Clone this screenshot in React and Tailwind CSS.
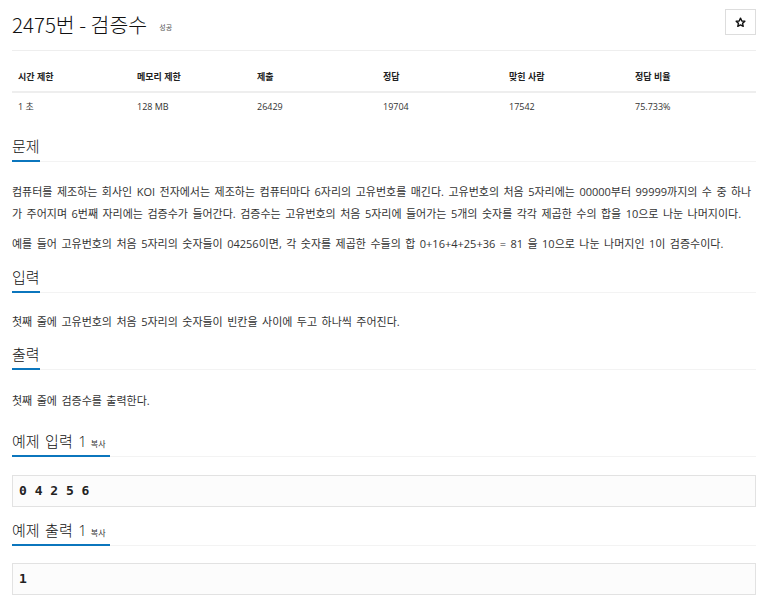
import React from "react";

const stats = [
  ["시간 제한", "1 초"],
  ["메모리 제한", "128 MB"],
  ["제출", "26429"],
  ["정답", "19704"],
  ["맞힌 사람", "17542"],
  ["정답 비율", "75.733%"],
];

const mono = { fontFamily: '"DejaVu Sans Mono", "Liberation Mono", monospace' };

function SectionTitle({ children, small, barWidth = "w-[28px]" }) {
  return (
    <div className="relative border-b border-[#f3f3f3]">
      <h2 className="h-[26px] text-[15px] leading-[22px] pb-[4px] font-light text-[#111] flex items-baseline">
        {children}
        {small && <span className="text-[8px] leading-[22px] ml-[4px] font-normal text-[#333]">{small}</span>}
      </h2>
      <div className={`absolute left-0 bottom-[-1px] h-[2px] bg-[#0b76bd] ${barWidth}`} />
    </div>
  );
}

function Sample({ value }) {
  return (
    <pre
      className="h-[32px] border border-[#e2e2e2] bg-[#fcfcfc] px-[6px] py-[6px] text-[13px] leading-[18px] font-bold text-[#222] [word-spacing:0px]"
      style={mono}
    >
      {value}
    </pre>
  );
}

export default function App() {
  return (
    <div
      className="w-[771px] h-[608px] bg-white text-[#333] pl-[12px] pr-[15px] overflow-hidden [word-spacing:1.6px]"
      style={{ fontFamily: '"Open Sans", "Noto Sans CJK KR", sans-serif' }}
    >
      {/* title bar */}
      <div className="h-[51px] flex justify-between border-b border-[#eee] [word-spacing:0px]">
        <h1 className="h-[49px] flex items-center text-[20.5px] font-light text-[#111]">
          <span style={{ fontFamily: '"Noto Sans CJK KR", sans-serif' }}>2475번 - 검증수</span>
          <span className="text-[7px] ml-[12px] mt-[7px] font-normal text-[#555]">성공</span>
        </h1>
        <button className="mt-[9px] w-[31px] h-[26px] border border-[#ddd] bg-white flex items-center justify-center">
          <svg width="11" height="11" viewBox="0 0 24 24" fill="none" stroke="#111" strokeWidth="3" strokeLinejoin="round">
            <path d="M12 2.5l2.9 6.2 6.6.7-5 4.5 1.5 6.6L12 17.2l-6 3.3 1.5-6.6-5-4.5 6.6-.7z" />
          </svg>
        </button>
      </div>

      {/* stats */}
      <div className="grid grid-cols-[119px_120px_126px_126px_126px_1fr] text-[9px] [word-spacing:0px]">
        {stats.map(([h]) => (
          <div
            key={h}
            className="h-[42px] flex items-end pb-[7px] pl-[6px] leading-[14px] font-bold text-[#222] border-b-2 border-[#eee]"
          >
            {h}
          </div>
        ))}
        {stats.map(([h, v]) => (
          <div key={h + "v"} className="h-[27px] flex items-center pl-[6px] text-[#333]">
            {v}
          </div>
        ))}
      </div>

      {/* 문제 */}
      <div className="mt-[15px]">
        <SectionTitle>문제</SectionTitle>
        <div className="pt-[19px] text-[11px] leading-[22px]">
          <p>
            컴퓨터를 제조하는 회사인 KOI 전자에서는 제조하는 컴퓨터마다 6자리의 고유번호를 매긴다. 고유번호의 처음 5자리에는 00000부터 99999까지의 수 중 하나가 주어지며 6번째 자리에는 검증수가 들어간다. 검증수는 고유번호의 처음 5자리에 들어가는 5개의 숫자를 각각 제곱한 수의 합을 10으로 나눈 나머지이다.
          </p>
          <p className="mt-[8px]">
            예를 들어 고유번호의 처음 5자리의 숫자들이 04256이면, 각 숫자를 제곱한 수들의 합 0+16+4+25+36 = 81 을 10으로 나눈 나머지인 1이 검증수이다.
          </p>
        </div>
      </div>

      {/* 입력 */}
      <div className="mt-[11px]">
        <SectionTitle>입력</SectionTitle>
        <p className="pt-[18px] text-[11px] leading-[22px]">
          첫째 줄에 고유번호의 처음 5자리의 숫자들이 빈칸을 사이에 두고 하나씩 주어진다.
        </p>
      </div>

      {/* 출력 */}
      <div className="mt-[10px]">
        <SectionTitle>출력</SectionTitle>
        <p className="pt-[20px] text-[11px] leading-[22px]">첫째 줄에 검증수를 출력한다.</p>
      </div>

      {/* 예제 */}
      <div className="mt-[18px]">
        <SectionTitle small="복사" barWidth="w-[98px]">예제 입력 1</SectionTitle>
        <div className="mt-[18px]">
          <Sample value="0 4 2 5 6" />
        </div>
      </div>

      <div className="mt-[12px]">
        <SectionTitle small="복사" barWidth="w-[98px]">예제 출력 1</SectionTitle>
        <div className="mt-[17px]">
          <Sample value="1" />
        </div>
      </div>
    </div>
  );
}
